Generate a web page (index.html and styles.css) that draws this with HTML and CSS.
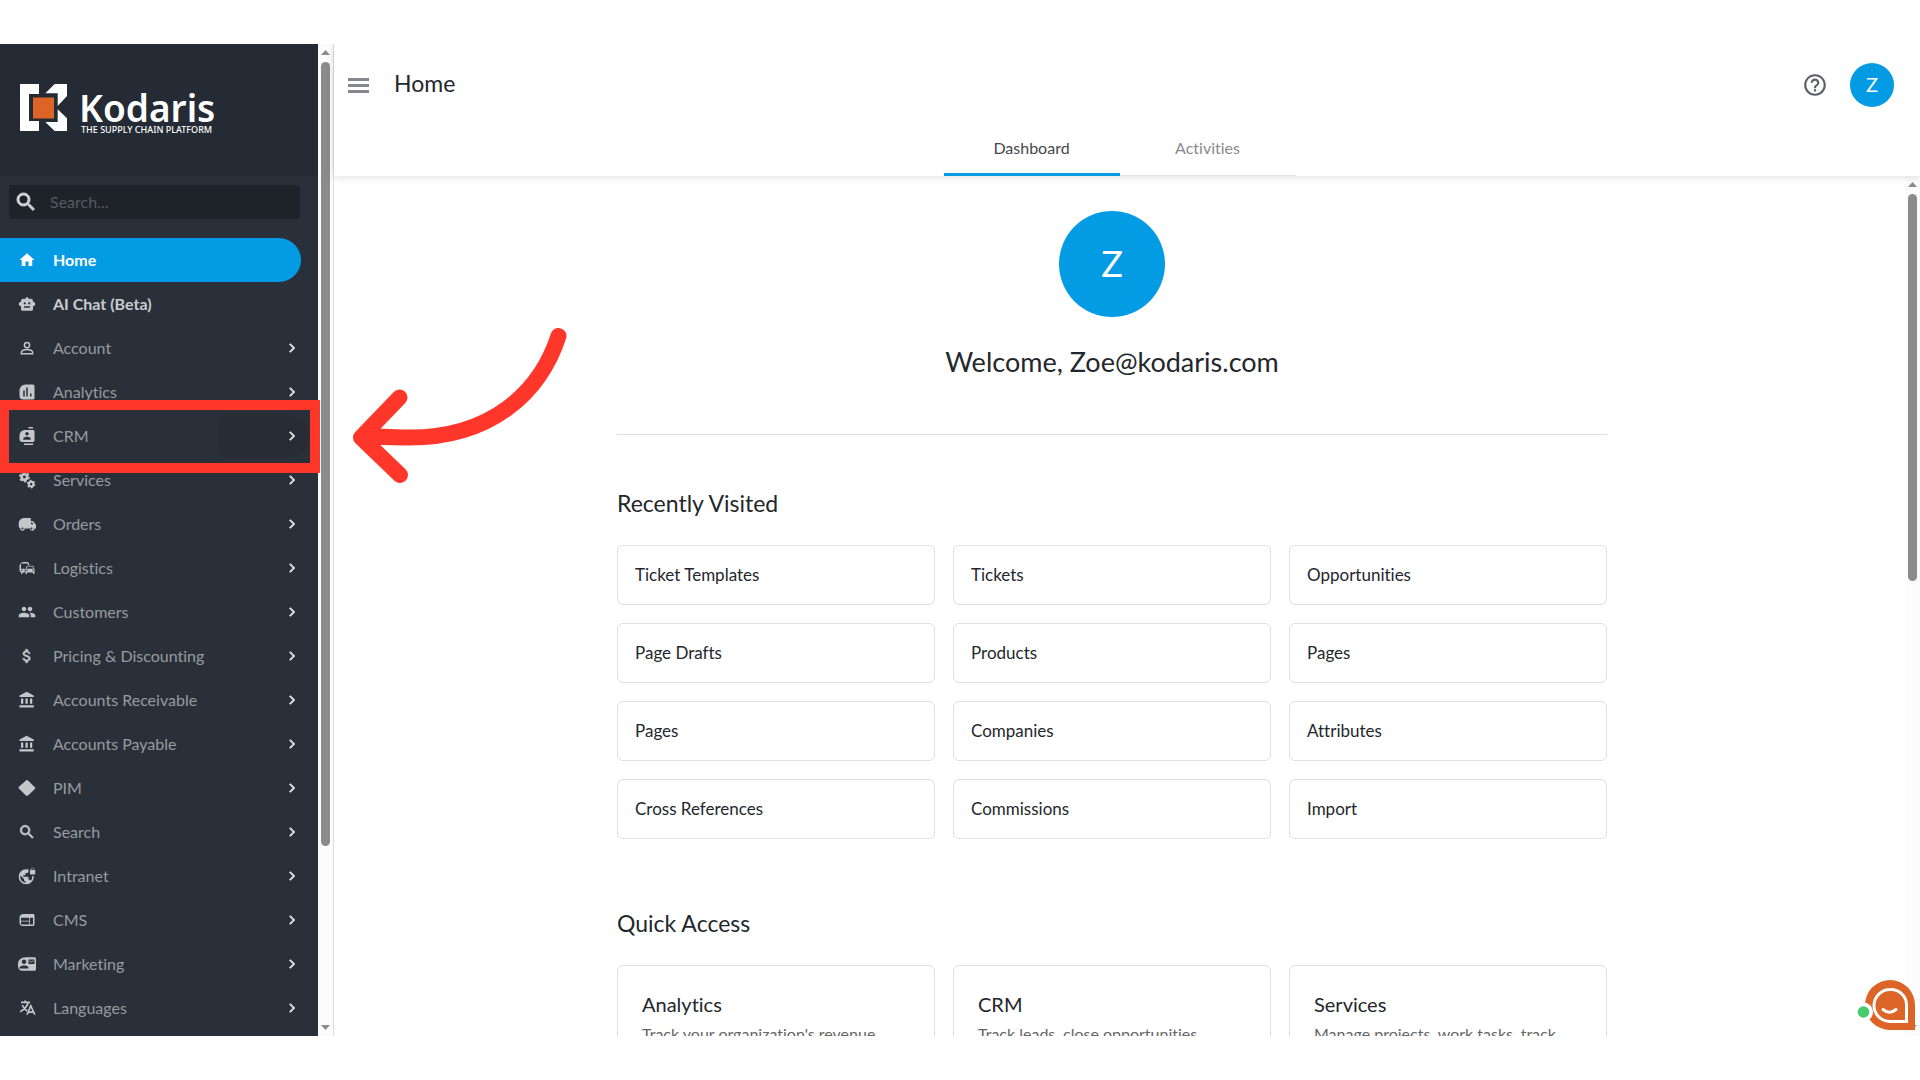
FILE: index.html
```html
<!DOCTYPE html>
<html lang="en">
<head>
  <meta charset="utf-8">
  <title>Kodaris - Home</title>
  <link rel="stylesheet" href="styles.css">
</head>
<body>

<!-- icons used more than once -->
<svg class="defs" width="0" height="0">
  <symbol id="chevron" viewBox="0 0 24 24"><path d="M8.6 7.4 13.2 12l-4.6 4.6L10 18l6-6-6-6z"/></symbol>
  <symbol id="bank" viewBox="0 0 24 24"><path d="M4 10v7h3v-7H4zm6 0v7h3v-7h-3zM2 22h19v-3H2v3zm14-12v7h3v-7h-3zm-4.500-9L2 6v2h19V6l-9.500-5z"/></symbol>
  <symbol id="search" viewBox="0 0 24 24"><path d="M15.5 14h-.79l-.28-.27C15.41 12.59 16 11.11 16 9.5 16 5.91 13.09 3 9.5 3S3 5.91 3 9.5 5.91 16 9.5 16c1.61 0 3.09-.59 4.23-1.57l.27.28v.79l5 4.99L20.49 19l-4.99-5zm-6 0C7.01 14 5 11.99 5 9.5S7.01 5 9.5 5 14 7.01 14 9.5 11.99 14 9.5 14z"/></symbol>
  <symbol id="arrow-up" viewBox="0 0 9 5"><path d="M0 5 4.5 0 9 5z"/></symbol>
  <symbol id="arrow-down" viewBox="0 0 9 5"><path d="M0 0h9L4.500 5z"/></symbol>
</svg>

<div class="app">

  <aside class="sidebar">
    <div class="brand">
      <svg class="brand-mark" viewBox="0 0 47 47">
        <path fill="#fff" d="M0 0h19v10H9v27h10v10H0zM25.300 9.300 34.700 0H47v12l-9.300 10V9.300zM37.700 25.300 47 34.300V47H34.700l-9.400-9h12.400z"/>
        <path fill="#dc6427" d="M13 13.500h21v21H13z"/>
      </svg>
      <div class="brand-text">
        <div class="brand-name">Kodaris</div>
        <div class="brand-tag">THE SUPPLY CHAIN PLATFORM</div>
      </div>
    </div>

    <label class="search">
      <svg><use href="#search"/></svg>
      <input type="text" placeholder="Search..." aria-label="Search">
    </label>

    <nav class="menu">
      <a class="item active" href="#"><svg class="icon" viewBox="0 0 24 24"><path d="M10 20v-6h4v6h5v-8h3L12 3 2 12h3v8z"/></svg><span>Home</span></a>
      <a class="item strong" href="#"><svg class="icon" viewBox="0 0 24 24"><path fill-rule="evenodd" d="M10.500 3.500a1.800 1.800 0 0 1 3.200 1.500H17a3 3 0 0 1 3 3v1a3 3 0 0 1 3 3c0 1.700-1.300 3-3 3v4a2 2 0 0 1-2 2H6a2 2 0 0 1-2-2v-4c-1.700 0-3-1.300-3-3s1.300-3 3-3V8a3 3 0 0 1 3-3h3.300zM9 9.500a1.500 1.500 0 1 0 0 3 1.500 1.500 0 0 0 0-3zm6 0a1.500 1.500 0 1 0 0 3 1.500 1.500 0 0 0 0-3zM8 15v2h8v-2z"/></svg><span>AI Chat (Beta)</span></a>
      <a class="item" href="#"><svg class="icon" viewBox="0 0 24 24"><g fill="none" stroke="currentColor" stroke-width="2"><circle cx="12" cy="8" r="3.500"/><path d="M4.500 19.500V17.500c0-2 4-3.500 7.500-3.500s7.500 1.500 7.500 3.500v2z"/></g></svg><span>Account</span><svg class="chevron"><use href="#chevron"/></svg></a>
      <a class="item" href="#"><svg class="icon" viewBox="0 0 24 24"><path fill-rule="evenodd" d="M10 2h10a2 2 0 0 1 2 2v16a2 2 0 0 1-2 2H7a5 5 0 0 1-5-5v-7a8 8 0 0 1 8-8zm-3 8v8h2v-8zm4-4v12h2V6zm5 8v4h2v-4z"/></svg><span>Analytics</span><svg class="chevron"><use href="#chevron"/></svg></a>
      <a class="item ripple" href="#"><svg class="icon" viewBox="0 0 24 24"><path d="M20 0h-6v2h6V0zM8 24h12v-2H8v2zM20 4h-10c-5 0-8 3-8 8v4c0 2.500 1.500 4 4 4h14c1.100 0 2-.9 2-2V6c0-1.100-.9-2-2-2zm-8 2.750c1.240 0 2.250 1.010 2.250 2.250s-1.010 2.250-2.250 2.250S9.750 10.240 9.750 9 10.760 6.750 12 6.750zM17 17H7v-1.500c0-1.670 3.330-2.500 5-2.500s5 .83 5 2.500V17z"/></svg><span>CRM</span><svg class="chevron"><use href="#chevron"/></svg></a>
      <a class="item" href="#"><svg class="icon" viewBox="0 0 24 24"><g fill="none" stroke="currentColor"><circle cx="8.500" cy="8" r="3.700" stroke-width="3.600"/><circle cx="8.500" cy="8" r="6" stroke-width="2.400" stroke-dasharray="3.200 3.080"/><circle cx="17.500" cy="17.500" r="3" stroke-width="2.800"/><circle cx="17.500" cy="17.500" r="4.800" stroke-width="1.800" stroke-dasharray="2.500 2.520"/></g></svg><span>Services</span><svg class="chevron"><use href="#chevron"/></svg></a>
      <a class="item" href="#"><svg class="icon" viewBox="0 0 24 24"><path d="M9 4h8v4h3l4 5v5h-2a3 3 0 0 1-6 0H9a3 3 0 0 1-6 0c-1.500-1-2-2-2-4V11c0-4 3-7 8-7z"/><g fill="#29303a"><path d="M17.500 9.500h1.200l2 2.700h-3.200z"/><circle cx="6" cy="18" r="1.300"/><circle cx="18" cy="18" r="1.300"/></g></svg><span>Orders</span><svg class="chevron"><use href="#chevron"/></svg></a>
      <a class="item" href="#"><svg class="icon" viewBox="0 0 24 24"><path d="M12 4H8C4.500 4 2 6.500 2 10v5c0 1.660 1.340 3 3 3l-1 1v1h1l2-2.030L9 18v-5H4V5.980L13 6v2h2V7c0-1.660-1.340-3-3-3zM5 14c.55 0 1 .45 1 1s-.45 1-1 1-1-.45-1-1 .45-1 1-1zm15.570-4.340c-.14-.4-.52-.66-.97-.66h-7.190c-.46 0-.83.26-.98.66L10 13.770l.01 5.510c0 .38.31.72.69.72h.62c.38 0 .68-.38.68-.76V18h8v1.240c0 .38.31.76.69.76h.61c.38 0 .69-.34.69-.72l.01-1.370v-4.140l-1.430-4.110zM12.410 10h7.190l1.030 3h-9.250l1.030-3zM12 16c-.55 0-1-.45-1-1s.45-1 1-1 1 .45 1 1-.45 1-1 1zm8 0c-.55 0-1-.45-1-1s.45-1 1-1 1 .45 1 1-.45 1-1 1z"/></svg><span>Logistics</span><svg class="chevron"><use href="#chevron"/></svg></a>
      <a class="item" href="#"><svg class="icon" viewBox="0 0 24 24"><path d="M16 11c1.660 0 2.990-1.340 2.990-3S17.660 5 16 5c-1.660 0-3 1.340-3 3s1.340 3 3 3zm-8 0c1.660 0 2.990-1.340 2.990-3S9.660 5 8 5C6.340 5 5 6.340 5 8s1.340 3 3 3zm0 2c-2.330 0-7 1.170-7 3.500V19h14v-2.500c0-2.330-4.670-3.500-7-3.500zm8 0c-.29 0-.62.02-.97.05 1.160.84 1.970 1.970 1.970 3.450V19h6v-2.500c0-2.330-4.670-3.500-7-3.500z"/></svg><span>Customers</span><svg class="chevron"><use href="#chevron"/></svg></a>
      <a class="item" href="#"><svg class="icon" viewBox="0 0 24 24"><path stroke="currentColor" stroke-width=".6" d="M11.800 10.900c-2.270-.59-3-1.200-3-2.150 0-1.090 1.010-1.850 2.700-1.850 1.780 0 2.440.85 2.500 2.100h2.210c-.07-1.720-1.120-3.300-3.210-3.810V3h-3v2.160c-1.940.42-3.500 1.680-3.500 3.610 0 2.310 1.910 3.460 4.700 4.130 2.500.6 3 1.480 3 2.410 0 .69-.49 1.790-2.700 1.790-2.060 0-2.870-.92-2.980-2.100h-2.200c.12 2.190 1.760 3.420 3.680 3.830V21h3v-2.150c1.950-.37 3.500-1.500 3.500-3.550 0-2.840-2.430-3.810-4.700-4.400z"/></svg><span>Pricing &amp; Discounting</span><svg class="chevron"><use href="#chevron"/></svg></a>
      <a class="item" href="#"><svg class="icon"><use href="#bank"/></svg><span>Accounts Receivable</span><svg class="chevron"><use href="#chevron"/></svg></a>
      <a class="item" href="#"><svg class="icon"><use href="#bank"/></svg><span>Accounts Payable</span><svg class="chevron"><use href="#chevron"/></svg></a>
      <a class="item" href="#"><svg class="icon" viewBox="0 0 24 24"><path d="M10 2.500a2.800 2.800 0 0 1 4 0l8.200 8a2.200 2.200 0 0 1 0 3l-8.500 8a2.500 2.500 0 0 1-3.500 0L1.500 13a2 2 0 0 1 0-3z"/></svg><span>PIM</span><svg class="chevron"><use href="#chevron"/></svg></a>
      <a class="item" href="#"><svg class="icon bold"><use href="#search"/></svg><span>Search</span><svg class="chevron"><use href="#chevron"/></svg></a>
      <a class="item" href="#"><svg class="icon" viewBox="0 0 24 24"><path d="M22 4v-.5C22 2.120 20.880 1 19.500 1S17 2.120 17 3.500V4c-.55 0-1 .45-1 1v4c0 .55.45 1 1 1h5c.55 0 1-.45 1-1V5c0-.55-.45-1-1-1zm-.8 0h-3.400v-.5c0-.94.76-1.700 1.700-1.700s1.700.76 1.700 1.700V4zm-2.280 8c.04.33.08.66.08 1 0 2.080-.8 3.970-2.100 5.390-.26-.81-1-1.390-1.900-1.390h-1v-3c0-.55-.45-1-1-1H7v-2h2c.55 0 1-.45 1-1V8h2c1.100 0 2-.9 2-2V3.460c-.95-.3-1.950-.46-3-.46C5.480 3 1 7.480 1 13s4.480 10 10 10 10-4.480 10-10c0-.34-.02-.67-.05-1h-2.030zM10 20.930c-3.950-.49-7-3.850-7-7.930 0-.62.08-1.210.21-1.790L8 16v1c0 1.100.9 2 2 2v1.930z"/></svg><span>Intranet</span><svg class="chevron"><use href="#chevron"/></svg></a>
      <a class="item" href="#"><svg class="icon" viewBox="0 0 24 24"><path d="M20 4H8c-4 0-6 2-6 5v5c0 4 1 6 5 6h13c1.100 0 2-.9 2-2V6c0-1.100-.9-2-2-2zm-5 14H4v-4h11v4zm0-5H4V9h11v4zm5 5h-4V9h4v9z"/></svg><span>CMS</span><svg class="chevron"><use href="#chevron"/></svg></a>
      <a class="item" href="#"><svg class="icon" viewBox="0 0 24 24"><path d="M21 8V7l-3 2-3-2v1l3 2 3-2zm1-5H10C4 3 0 7 0 12v2c0 4 2 7 6 7h16c1.100 0 1.990-.9 1.990-2L24 5c0-1.100-.9-2-2-2zM8 6c1.660 0 3 1.340 3 3s-1.340 3-3 3-3-1.340-3-3 1.340-3 3-3zm6 12H2v-1c0-2 4-3.100 6-3.100s6 1.100 6 3.100v1zm8-6h-8V6h8v6z"/></svg><span>Marketing</span><svg class="chevron"><use href="#chevron"/></svg></a>
      <a class="item" href="#"><svg class="icon" viewBox="0 0 24 24"><path fill="none" stroke="currentColor" stroke-width="2.200" d="M4 4.500h12M9.500 2v2.500M13.500 5C12 10 8 14 3 17M5.500 8c2 4 4 6 6.500 8M12 21l5-12 5.500 12M13.500 17.500h7"/></svg><span>Languages</span><svg class="chevron"><use href="#chevron"/></svg></a>
    </nav>
  </aside>

  <div class="scrollbar">
    <svg><use href="#arrow-up"/></svg>
    <div class="track"><div class="thumb" style="height: 82%"></div></div>
    <svg><use href="#arrow-down"/></svg>
  </div>

  <div class="page">
    <header class="topbar">
      <div class="topbar-row">
        <button class="burger" type="button" aria-label="Toggle menu"><i></i><i></i><i></i></button>
        <h1>Home</h1>
        <button class="help" type="button" aria-label="Help"><svg viewBox="0 0 24 24"><path d="M11 18h2v-2h-2v2zm1-16C6.480 2 2 6.480 2 12s4.480 10 10 10 10-4.480 10-10S17.520 2 12 2zm0 18c-4.410 0-8-3.590-8-8s3.590-8 8-8 8 3.590 8 8-3.590 8-8 8zm0-14c-2.210 0-4 1.790-4 4h2c0-1.100.9-2 2-2s2 .9 2 2c0 2-3 1.750-3 5h2c0-2.250 3-2.500 3-5 0-2.210-1.790-4-4-4z"/></svg></button>
        <button class="avatar" type="button">Z</button>
      </div>
      <nav class="tabs">
        <a class="tab selected" href="#">Dashboard</a>
        <a class="tab" href="#">Activities</a>
      </nav>
    </header>

    <div class="body">
      <main class="content">
        <section class="welcome">
          <div class="avatar large">Z</div>
          <p>Welcome, Zoe@kodaris.com</p>
        </section>

        <h2>Recently Visited</h2>
        <div class="cards">
          <a class="card" href="#">Ticket Templates</a>
          <a class="card" href="#">Tickets</a>
          <a class="card" href="#">Opportunities</a>
          <a class="card" href="#">Page Drafts</a>
          <a class="card" href="#">Products</a>
          <a class="card" href="#">Pages</a>
          <a class="card" href="#">Pages</a>
          <a class="card" href="#">Companies</a>
          <a class="card" href="#">Attributes</a>
          <a class="card" href="#">Cross References</a>
          <a class="card" href="#">Commissions</a>
          <a class="card" href="#">Import</a>
        </div>

        <h2 class="quick">Quick Access</h2>
        <div class="cards">
          <a class="card tall" href="#"><h3>Analytics</h3><p>Track your organization's revenue</p></a>
          <a class="card tall" href="#"><h3>CRM</h3><p>Track leads, close opportunities</p></a>
          <a class="card tall" href="#"><h3>Services</h3><p>Manage projects, work tasks, track</p></a>
        </div>
      </main>
      <div class="scrollbar">
        <svg><use href="#arrow-up"/></svg>
        <div class="track"><div class="thumb" style="height: 47%"></div></div>
        <svg><use href="#arrow-down"/></svg>
      </div>
    </div>
  </div>

  <button class="chat" type="button" aria-label="Chat">
    <svg viewBox="0 0 58 50">
      <path fill="#dc6427" d="M33 0a25 25 0 0 1 25 25v25H33a25 25 0 0 1 0-50z"/>
      <path fill="none" stroke="#fff" stroke-width="3" d="M33 9.500a15.500 15.500 0 0 1 16.500 16v16H33a16 16 0 0 1 0-32z"/>
      <path fill="none" stroke="#fff" stroke-width="3" stroke-linecap="round" d="M26 29.500q6.500 5.500 13 0"/>
      <circle cx="6.500" cy="32" r="9.500" fill="#fff"/>
      <circle cx="6.500" cy="32" r="5.800" fill="#48cb6c"/>
    </svg>
  </button>

  <!-- callout over the CRM entry -->
  <div class="callout"></div>
  <svg class="pointer" viewBox="0 0 220 160">
    <path d="M205.500 8C188 62 140 112 50 109.500Q30 109 13 108M46.500 69.500 8 109.500 47 147"/>
  </svg>
</div>

</body>
</html>
```
FILE: styles.css
```css
* { box-sizing: border-box; }

body {
  margin: 0;
  padding: 44px 0;
  height: 100vh;
  background: #fff;
  color: #23272c;
  font-family: Lato, "Noto Sans", sans-serif;
  font-size: 16px;
  font-variant-ligatures: none;
}

a { color: inherit; text-decoration: none; }
button { border: 0; padding: 0; background: none; font: inherit; cursor: pointer; }
h1, h2, h3, p { margin: 0; font-weight: 400; }
svg { display: block; fill: currentColor; }
.defs { position: absolute; }

.app {
  position: relative;
  display: flex;
  height: 100%;
  overflow: hidden;
}

/* sidebar */

.sidebar {
  flex: 0 0 318px;
  background: #29303a;
  overflow: hidden;
}

.brand {
  display: flex;
  gap: 12px;
  height: 132px;
  padding: 40px 20px 0;
  background: #242b34;
  color: #fff;
}
.brand-mark { width: 47px; height: 47px; }
.brand-text { padding-top: 6px; }
.brand-name { font: 600 37px/35px "Noto Sans", sans-serif; }
.brand-tag {
  padding-left: 2px;
  font: 500 9px/10px "Noto Sans", sans-serif;
  white-space: nowrap;
}

.search {
  display: flex;
  align-items: center;
  gap: 12px;
  height: 34px;
  margin: 9px 18px 19px 9px;
  padding-left: 5px;
  border-radius: 4px;
  background: #1e2329;
  color: #d0d2d4;
}
.search svg { width: 24px; height: 24px; stroke: currentColor; }
.search input {
  flex: 1;
  min-width: 0;
  padding: 0 0 2px;
  border: 0;
  outline: 0;
  background: none;
  color: #fff;
  font: inherit;
}
.search input::placeholder { color: #555a60; opacity: 1; }

.item {
  display: flex;
  align-items: center;
  height: 44px;
  margin-right: 17px;
  padding-left: 18px;
  color: #989b9f;
}
.item span { flex: 1; margin-left: 17px; padding-bottom: 2px; }
.icon { width: 18px; height: 18px; color: #c4c6c9; }
.icon.bold { stroke: currentColor; }
.chevron { width: 18px; height: 18px; color: #d4d6d8; stroke: currentColor; }
.item.strong { color: #c9cbce; font-weight: 700; }
.item.active {
  border-radius: 0 22px 22px 0;
  background: #049be5;
  color: #fff;
  font-weight: 700;
}
.item.active .icon { color: #fff; }
.item.ripple {
  margin-right: 8px;
  padding-right: 9px;
  border-radius: 0 22px 22px 0;
  background: radial-gradient(ellipse 200px 100px at 417px 50%, #282c34 99%, transparent) no-repeat;
}

/* scrollbars */

.scrollbar {
  display: flex;
  flex-direction: column;
  align-items: center;
  flex: 0 0 15px;
  padding: 6px 0;
  background: #fcfcfc;
  color: #8b8b8b;
}
.scrollbar svg { width: 9px; height: 5px; }
.track { flex: 1; width: 9px; margin: 7px 0; }
.thumb { border-radius: 5px; background: #8b8b8b; }

/* page */

.page {
  flex: 1;
  display: flex;
  flex-direction: column;
  min-width: 0;
  border-left: 1px solid #ddd;
}

.topbar {
  position: relative;
  height: 132px;
  padding-right: 15px;
  background: #fff;
  box-shadow: 0 1px 8px rgba(0, 0, 0, .14);
}
.topbar-row {
  display: flex;
  align-items: center;
  height: 82px;
  padding: 0 11px 0 14px;
}
.topbar h1 { flex: 1; margin-left: 25px; padding-bottom: 4px; font-size: 23px; }

.burger { display: grid; gap: 3px; width: 21px; }
.burger i { height: 3px; background: #85888d; }
.help { margin-right: 22px; color: #5b5f66; }
.help svg { width: 26px; height: 26px; }

.avatar {
  display: flex;
  align-items: center;
  justify-content: center;
  width: 44px;
  height: 44px;
  padding-bottom: 2px;
  border-radius: 50%;
  background: #049be5;
  color: #fff;
  font-size: 20px;
}
.avatar.large { width: 106px; height: 106px; font-size: 36px; }

.tabs { display: flex; justify-content: center; }
.tab {
  width: 176px;
  height: 50px;
  padding-top: 10px;
  border-bottom: 1px solid #e2e2e2;
  color: #8a8a8a;
  line-height: 24px;
  text-align: center;
}
.tab.selected { border-bottom: 3px solid #049be5; color: #45484c; }

.body { flex: 1; display: flex; min-height: 0; }
.content { flex: 1; padding-right: 15px; overflow: hidden; }
.content > * { max-width: 990px; margin-left: auto; margin-right: auto; }

.welcome {
  display: flex;
  flex-direction: column;
  align-items: center;
  height: 259px;
  padding-top: 35px;
  border-bottom: 1px solid #ddd;
}
.welcome p { margin-top: 28px; font-size: 27px; line-height: 34px; }

h2 { margin-top: 54px; font-size: 23px; line-height: 28px; }
h2.quick { margin-top: 70px; }

.cards {
  display: grid;
  grid-template-columns: repeat(3, 1fr);
  gap: 18px;
  margin-top: 28px;
}
.card {
  height: 60px;
  padding: 0 17px;
  border: 1px solid #e0e0e0;
  border-radius: 6px;
  font-size: 17px;
  line-height: 58px;
}
.card.tall { height: 150px; padding: 24px; }
.card h3 { font-size: 20px; line-height: 28px; }
.card p { margin-top: 6px; color: #666; font-size: 16px; line-height: 20px; }

.chat { position: absolute; right: 5px; bottom: 6px; }
.chat svg { width: 58px; height: 50px; }

.callout {
  position: absolute;
  left: -1px;
  top: 356px;
  width: 321px;
  height: 73px;
  border: 10px solid #ff372b;
}
.pointer {
  position: absolute;
  left: 353px;
  top: 284px;
  width: 220px;
  height: 160px;
  fill: none;
  stroke: #ff372b;
  stroke-width: 16;
  stroke-linecap: round;
  stroke-linejoin: round;
}
```
